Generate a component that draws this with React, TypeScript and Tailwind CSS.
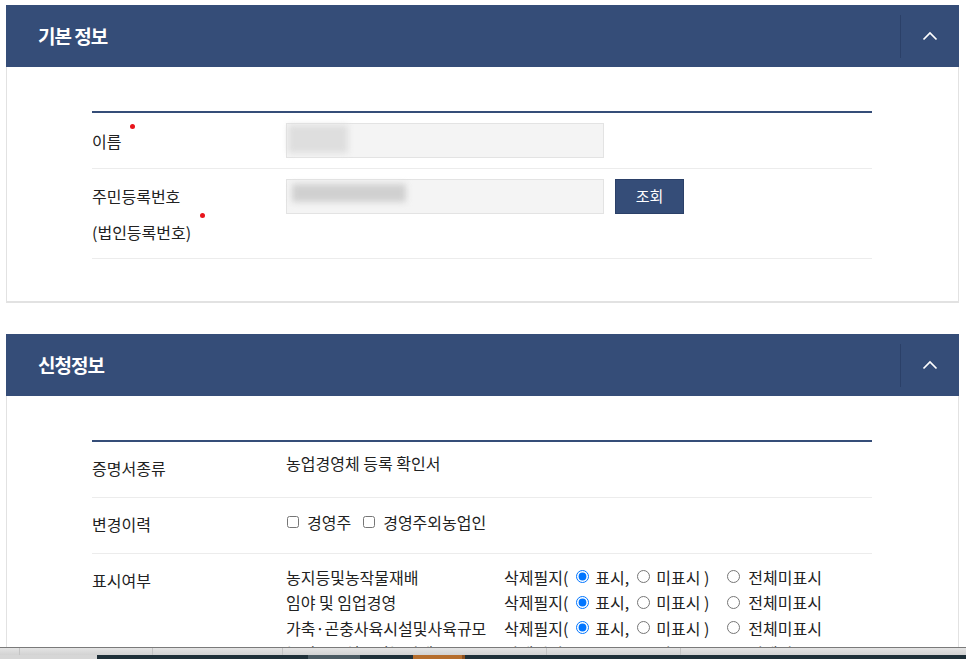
import React from "react";

const font = { fontFamily: '"Noto Sans CJK KR", "Noto Sans", sans-serif' };

function Chevron() {
  return (
    <svg width="16" height="10" viewBox="0 0 16 10" fill="none">
      <path d="M1.5 8.5L8 2l6.5 6.5" stroke="#ffffff" strokeWidth="1.7" />
    </svg>
  );
}

function PanelHeader({ title }: { title: string }) {
  return (
    <div className="flex h-[62px] items-center bg-[#354d78]">
      <h2 className="flex-1 pl-[32px] text-[19px] font-bold tracking-[-1px] text-white">{title}</h2>
      <div className="flex h-[43px] w-[59px] items-center justify-center border-l border-[#2b4068]">
        <Chevron />
      </div>
    </div>
  );
}

function Dot({ cls }: { cls: string }) {
  return <span className={`relative ml-[9px] inline-block h-[5px] w-[5px] rounded-full bg-[#e8141b] align-top ${cls}`} />;
}

function Blur({ cls }: { cls: string }) {
  return <div className={`blur-[3px] ${cls}`} />;
}

const displayRows = [
  "농지등및농작물재배",
  "임야 및 임업경영",
  "가축·곤충사육시설및사육규모",
  "농업용시설물및농기계",
];

function RadioLine({ label, idx }: { label: string; idx: number }) {
  return (
    <div className="flex h-[25.5px] items-center">
      <span className="w-[218px] shrink-0">{label}</span>
      <span>삭제필지(</span>
      <input type="radio" name={`r${idx}`} defaultChecked className="m-0 ml-[8px] h-[13px] w-[13px]" />
      <span className="ml-[6px]">표시,</span>
      <input type="radio" name={`r${idx}`} className="m-0 ml-[8px] h-[13px] w-[13px]" />
      <span className="ml-[6px]">미표시 )</span>
      <input type="radio" name={`a${idx}`} className="m-0 ml-[18px] h-[13px] w-[13px]" />
      <span className="ml-[8px]">전체미표시</span>
    </div>
  );
}

export default function App() {
  return (
    <div className="flex h-[659px] flex-col overflow-hidden bg-white text-[16px] text-[#222]" style={font}>
      <div className="min-h-0 flex-1 overflow-hidden px-[6px] pr-[7px] pt-[5px]">
        {/* 기본 정보 */}
        <section>
          <PanelHeader title="기본 정보" />
          <div className="border-x border-b-2 border-[#e2e2e2] pb-[42px] pl-[85px] pr-[86px] pt-[44px]">
            <div className="border-t-2 border-[#354d78]">
              <div className="flex items-center border-b border-[#ececec] py-[10px]">
                <div className="w-[194px] shrink-0 leading-[24px]">
                  이름
                  <Dot cls="-top-[5px]" />
                </div>
                <div className="h-[35px] w-[318px] border border-[#e3e3e3] bg-[#f4f4f4] p-px">
                  <Blur cls="h-[28px] w-[60px] bg-[#dedede]" />
                </div>
              </div>
              <div className="flex items-start border-b border-[#ececec] pb-[8px] pt-[9px]">
                <div className="w-[194px] shrink-0 leading-[36px]">
                  주민등록번호
                  <br />
                  (법인등록번호)
                  <Dot cls="-top-[1px]" />
                </div>
                <div className="mt-px h-[35px] w-[318px] border border-[#e3e3e3] bg-[#f4f4f4] pl-[5px] pt-[4px]">
                  <Blur cls="h-[18px] w-[114px] bg-[#d0d0d0]" />
                </div>
                <button className="ml-[11px] mt-px h-[35px] w-[69px] border border-[#2b4068] bg-[#354d78] text-[15px] text-white">
                  조회
                </button>
              </div>
            </div>
          </div>
        </section>

        {/* 신청정보 */}
        <section className="mt-[31px]">
          <PanelHeader title="신청정보" />
          <div className="border-x border-[#e2e2e2] pl-[85px] pr-[86px] pt-[44px]">
            <div className="border-t-2 border-[#354d78]">
              <div className="flex h-[56px] border-b border-[#ececec]">
                <div className="w-[194px] shrink-0 pt-[14px] leading-[24px]">증명서종류</div>
                <div className="pt-[9px] leading-[24px]">농업경영체 등록 확인서</div>
              </div>
              <div className="flex h-[56px] border-b border-[#ececec]">
                <div className="w-[194px] shrink-0 pt-[14px] leading-[24px]">변경이력</div>
                <div className="mt-[12px] flex h-[24px] items-center">
                  <input type="checkbox" className="m-0 ml-px h-[12px] w-[12px]" />
                  <span className="ml-[8px]">경영주</span>
                  <input type="checkbox" className="m-0 ml-[12px] h-[12px] w-[12px]" />
                  <span className="ml-[8px]">경영주외농업인</span>
                </div>
              </div>
              <div className="flex">
                <div className="w-[194px] shrink-0 pt-[14px] leading-[24px]">표시여부</div>
                <div className="pt-[10px]">
                  {displayRows.map((r, i) => (
                    <RadioLine key={r} label={r} idx={i} />
                  ))}
                </div>
              </div>
            </div>
          </div>
        </section>
      </div>

      {/* bottom strip */}
      <div className="flex h-[12px] shrink-0 flex-col border-t border-[#7a7a7a] bg-[#dadada]">
        <div className="flex h-[7px] bg-gradient-to-b from-[#e4e4e4] to-[#d2d2d2]">
          <div className="w-[20px] border-r border-[#c4c4c4]" />
          <div className="w-[133px] border-r border-[#c4c4c4]" />
          <div className="w-[130px] border-r border-[#c4c4c4]" />
          <div className="w-[264px] border-r border-[#c4c4c4]" />
          <div className="w-[134px] border-r border-[#c4c4c4]" />
          <div className="flex-1" />
        </div>
        <div className="flex h-[4px]">
          <div className="w-[97px] bg-[#d6d6d6]" />
          <div className="flex flex-1 bg-[#1f3039]">
            <div className="w-[211px]" />
            <div className="w-[52px] bg-[#4a5a62]" />
            <div className="w-[53px]" />
            <div className="w-[49px] bg-[#b56d2c]" />
            <div className="w-[3px] bg-[#8a4f1e]" />
            <div className="flex-1" />
          </div>
        </div>
      </div>
    </div>
  );
}
